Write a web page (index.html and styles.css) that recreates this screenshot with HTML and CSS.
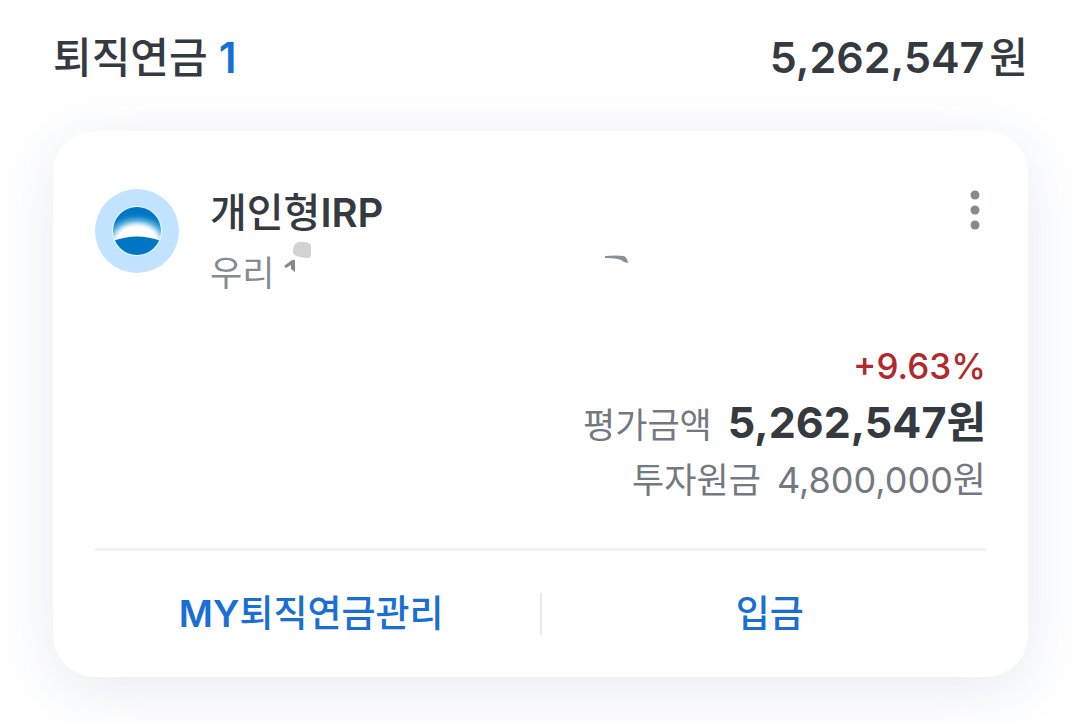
FILE: index.html
```html
<!DOCTYPE html>
<html lang="ko">
<head>
  <meta charset="UTF-8" />
  <meta name="viewport" content="width=device-width, initial-scale=1.0"/>
  <title>퇴직연금</title>
  <link rel="stylesheet" href="styles.css">
</head>
<body>

  <main class="pension">
    <header class="summary">
      <h1>퇴직연금 <span class="count">1</span></h1>
      <p class="total">5,262,547<span class="won">원</span></p>
    </header>

    <section class="card">
      <div class="account">
        <svg class="bank-logo" viewBox="0 0 84 84" aria-hidden="true">
          <defs>
            <radialGradient id="glow" gradientUnits="userSpaceOnUse" cx="0" cy="0" r="1" gradientTransform="translate(42 54) scale(37 30)">
              <stop offset="0.54" stop-color="#fff"/>
              <stop offset="0.62" stop-color="#d3eaf7"/>
              <stop offset="0.76" stop-color="#56aedd"/>
              <stop offset="0.9" stop-color="#0e80c7"/>
              <stop offset="1" stop-color="#0075c4"/>
            </radialGradient>
            <clipPath id="globe"><circle cx="42" cy="42" r="24"/></clipPath>
          </defs>
          <circle cx="42" cy="42" r="42" fill="#c1e3ff"/>
          <circle cx="42" cy="42" r="25" fill="#e6fbff"/>
          <g clip-path="url(#globe)">
            <rect x="18" y="18" width="48" height="48" fill="url(#glow)"/>
            <path d="M18 52Q42 43 66 52V66H18Z" fill="#0075c4"/>
          </g>
        </svg>

        <div class="account-info">
          <h2>개인형<span class="latin">IRP</span></h2>
          <div class="account-number">
            <span>우리</span>
            <svg class="masked" viewBox="0 0 350 36" aria-hidden="true">
              <path d="M13 3Q16 0 21 1Q29 1 29 5V14Q29 17 25 17Q11 16 11 11Q11 6 13 3Z" fill="#d0d2d3"/>
              <path d="M2 25L10 19H13V31L9 28V24L4 27Z" fill="#858a91"/>
              <path d="M323 15Q335 14 342 15Q346 18 346 22L342 21Q339 17 323 17Z" fill="#8b9096"/>
            </svg>
          </div>
        </div>

        <button class="more-btn" type="button" aria-label="더보기">
          <svg viewBox="0 0 10 40" aria-hidden="true">
            <circle cx="5" cy="5" r="4.5"/>
            <circle cx="5" cy="20" r="4.5"/>
            <circle cx="5" cy="35" r="4.5"/>
          </svg>
        </button>
      </div>

      <div class="balance">
        <p class="rate">+9.63%</p>
        <dl>
          <div class="row value">
            <dt>평가금액</dt>
            <dd>5,262,547원</dd>
          </div>
          <div class="row">
            <dt>투자원금</dt>
            <dd>4,800,000원</dd>
          </div>
        </dl>
      </div>

      <div class="actions">
        <button type="button"><span class="latin">MY</span>퇴직연금관리</button>
        <button type="button">입금</button>
      </div>
    </section>
  </main>

</body>
</html>
```
FILE: styles.css
```css
* {
  box-sizing: border-box;
  margin: 0;
  padding: 0;
}

body {
  background-color: #fff;
  color: #343a40;
  font-family: Inter, 'Noto Sans CJK KR', sans-serif;
}

.pension {
  padding: 31px 50px 48px 53px;
}

.summary {
  display: flex;
  justify-content: space-between;
  align-items: center;
  margin-bottom: 47px;
}

h1 {
  font-size: 42px;
  font-weight: 500;
  line-height: 52px;
}

.total {
  font-size: 43px;
  font-weight: 600;
  line-height: 52px;
}

.count {
  color: #1570dc;
  font-weight: 600;
}

.won {
  margin-left: 5px;
  font-size: 42px;
  font-weight: 500;
}

.latin {
  font-weight: 600;
}

.card {
  background-color: #fff;
  border-radius: 42px;
  box-shadow: 0 12px 60px rgba(60, 85, 145, 0.12);
  padding: 58px 42px 18px;
}

.account {
  display: flex;
  align-items: flex-start;
}

.bank-logo {
  flex: none;
  width: 84px;
  height: 84px;
  margin-right: 31px;
}

.account-info {
  flex: 1;
  min-width: 0;
}

h2 {
  font-size: 40px;
  font-weight: 500;
  line-height: 48px;
}

.account-number {
  display: flex;
  align-items: flex-start;
  gap: 8px;
  color: #868b91;
  font-size: 35px;
  line-height: 72px;
  height: 72px;
}

.masked {
  flex: 0 1 350px;
  min-width: 0;
  height: 36px;
  margin-top: 4px;
}

.more-btn {
  flex: none;
  border: none;
  background: none;
  cursor: pointer;
  padding: 1px 6px;
}

.more-btn svg {
  display: block;
  width: 10px;
  height: 40px;
  fill: #858a8f;
}

.balance {
  margin-top: 28px;
  padding-bottom: 39px;
  border-bottom: 3px solid #f1f2f3;
  color: #737980;
  font-size: 35px;
  line-height: 58px;
  text-align: right;
}

.rate {
  color: #b3282d;
  font-weight: 500;
}

.row {
  display: flex;
  justify-content: flex-end;
  align-items: baseline;
  gap: 16px;
}

.row dd {
  font-size: 36px;
}

.row.value {
  height: 56px;
  line-height: 54px;
}

.row.value dd {
  color: #343a40;
  font-size: 43px;
  font-weight: 700;
}

.actions {
  display: flex;
  margin-top: 42px;
  padding-bottom: 24px;
}

.actions button {
  flex: 1;
  border: none;
  background: none;
  color: #1a6fd4;
  font-family: inherit;
  font-size: 37px;
  font-weight: 500;
  line-height: 42px;
  padding-right: 12px;
  cursor: pointer;
}

.actions button + button {
  border-left: 2px solid #e7eaeb;
  padding-left: 12px;
  padding-right: 0;
}
```
